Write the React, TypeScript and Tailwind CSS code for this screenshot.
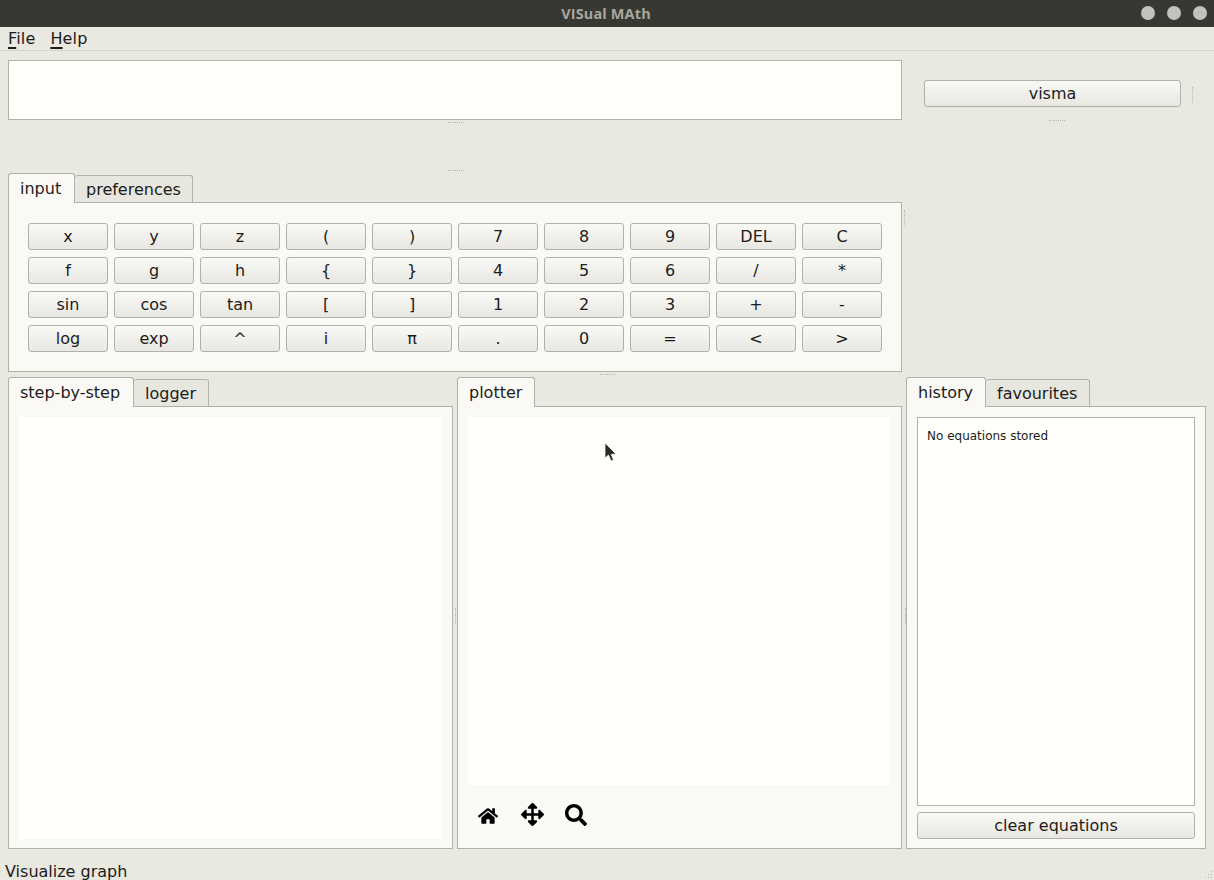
import React from "react";
import { FaHome, FaArrowsAlt, FaSearch } from "react-icons/fa";

const rows = [
  ["x", "y", "z", "(", ")", "7", "8", "9", "DEL", "C"],
  ["f", "g", "h", "{", "}", "4", "5", "6", "/", "*"],
  ["sin", "cos", "tan", "[", "]", "1", "2", "3", "+", "-"],
  ["log", "exp", "^", "i", "π", ".", "0", "=", "<", ">"],
];

function Btn({ label, className }: { label: string; className: string }) {
  return (
    <button className={"h-[27px] shrink-0 rounded-[3px] border border-[#b1b0a9] bg-gradient-to-b from-[#f9f9f6] to-[#e8e7e2] text-[16px] leading-[24px] text-[#1c1c1a] " + className}>
      {label}
    </button>
  );
}

function Tabs({ tabs }: { tabs: { label: string; w: string }[] }) {
  return (
    <div className="relative z-10 -mb-px flex h-[30px] items-end">
      {tabs.map((t, i) =>
        i === 0 ? (
          <div key={t.label} className={"flex h-[30px] items-start rounded-t-[3px] border border-b-0 border-[#b1b0a9] bg-[#faf9f5] pl-[11px] pt-[3px] text-[16px] leading-[24px] text-[#1c1c1a] " + t.w}>
            {t.label}
          </div>
        ) : (
          <div key={t.label} className={"flex h-[28px] items-start rounded-t-[3px] border border-l-0 border-[#b1b0a9] bg-[#e7e7e0] pl-[11px] pt-[2px] text-[16px] leading-[24px] text-[#1c1c1a] " + t.w}>
            {t.label}
          </div>
        )
      )}
    </div>
  );
}

function HDots({ className }: { className: string }) {
  return <div className={"absolute h-px w-[16px] border-t border-dotted border-[#b8b7b0] " + className} />;
}
function VDots({ className }: { className: string }) {
  return <div className={"absolute h-[16px] w-px border-l border-dotted border-[#b8b7b0] " + className} />;
}

export default function App() {
  return (
    <div className="relative flex h-[880px] w-[1214px] flex-col overflow-hidden bg-[#e9e9e2] font-['DejaVu_Sans',sans-serif] text-[#1c1c1a]">
      {/* Title bar */}
      <div className="relative flex h-[27px] shrink-0 items-center justify-center bg-[#383832]">
        <span className="pr-[2px] font-['Open_Sans','Noto_Sans',sans-serif] text-[14.4px] font-bold tracking-[0.2px] text-[#a7a7a0]">VISual MAth</span>
        <div className="absolute right-[7px] top-[6px] flex gap-[12px]">
          <span className="size-[14px] rounded-full bg-[#c2c2bd]" />
          <span className="size-[14px] rounded-full bg-[#c2c2bd]" />
          <span className="size-[14px] rounded-full bg-[#c2c2bd]" />
        </div>
      </div>

      {/* Menu bar */}
      <div className="flex h-[24px] shrink-0 items-start gap-[15px] border-b border-[#d3d2cc] pl-[8px] pt-[1px] text-[16px] leading-[22px] tracking-[0.15px]">
        <span><span className="underline decoration-2 underline-offset-[3px]">F</span>ile</span>
        <span><span className="underline decoration-2 underline-offset-[3px]">H</span>elp</span>
      </div>

      {/* Upper section */}
      <div className="flex h-[321px] shrink-0">
        <div className="ml-[8px] flex w-[894px] flex-col pt-[9px]">
          <div className="h-[60px] shrink-0 border border-[#b1b0a9] bg-[#fffffb]" />
          <div className="h-[53px] shrink-0" />
          <Tabs tabs={[{ label: "input", w: "w-[67px]" }, { label: "preferences", w: "w-[118px]" }]} />
          <div className="flex h-[170px] flex-col gap-[7px] border border-[#b1b0a9] bg-[#faf9f5] pl-[19px] pt-[20px]">
            {rows.map((r, i) => (
              <div key={i} className="flex gap-[6px]">
                {r.map((k) => (
                  <Btn key={k} label={k} className="w-[80px]" />
                ))}
              </div>
            ))}
          </div>
        </div>
        <div className="ml-[22px] pt-[29px]">
          <Btn label="visma" className="w-[257px]" />
        </div>
      </div>

      {/* Lower section */}
      <div className="flex gap-[4px] pl-[8px] pt-[5px]">
        <div className="flex w-[445px] flex-col">
          <Tabs tabs={[{ label: "step-by-step", w: "w-[126px]" }, { label: "logger", w: "w-[75px]" }]} />
          <div className="flex h-[443px] border border-[#b1b0a9] bg-[#faf9f5] p-[10px]">
            <div className="h-[422px] w-[423px] bg-[#fffffb]" />
          </div>
        </div>
        <div className="flex w-[445px] flex-col">
          <Tabs tabs={[{ label: "plotter", w: "w-[78px]" }]} />
          <div className="flex h-[443px] flex-col border border-[#b1b0a9] bg-[#faf9f5] p-[10px]">
            <div className="h-[368px] w-[422px] shrink-0 bg-[#fffffb]" />
            <div className="flex items-center pl-[10px] pt-[18px] text-black">
              <FaHome className="mt-[2px] size-[20px]" />
              <FaArrowsAlt className="ml-[23px] size-[23px]" />
              <FaSearch className="ml-[21px] size-[22px]" />
            </div>
          </div>
        </div>
        <div className="flex w-[300px] flex-col">
          <Tabs tabs={[{ label: "history", w: "w-[80px]" }, { label: "favourites", w: "w-[104px]" }]} />
          <div className="flex h-[443px] flex-col border border-[#b1b0a9] bg-[#faf9f5] p-[10px]">
            <div className="h-[389px] shrink-0 border border-[#b1b0a9] bg-[#fffffb] pl-[9px] pt-[11px] text-[12px] leading-[15px]">
              No equations stored
            </div>
            <Btn label="clear equations" className="mt-[6px] w-full" />
          </div>
        </div>
      </div>

      {/* Status bar */}
      <div className="absolute bottom-0 left-[5px] h-[17px] text-[16px] leading-[18px]">Visualize graph</div>

      {/* Splitter handles */}
      <HDots className="left-[448px] top-[122px]" />
      <HDots className="left-[448px] top-[170px]" />
      <HDots className="left-[1049px] top-[120px]" />
      <HDots className="left-[600px] top-[374px]" />
      <VDots className="left-[1192px] top-[87px]" />
      <VDots className="left-[904px] top-[210px]" />
      <VDots className="left-[455px] top-[608px]" />
      <VDots className="left-[905px] top-[608px]" />
      <svg className="absolute bottom-[1px] right-[1px] size-[8px]" viewBox="0 0 8 8" fill="#b4b3ac">
        <rect x="6" y="0" width="1" height="1" /><rect x="3" y="3" width="1" height="1" /><rect x="6" y="3" width="1" height="1" />
        <rect x="0" y="6" width="1" height="1" /><rect x="3" y="6" width="1" height="1" /><rect x="6" y="6" width="1" height="1" />
      </svg>

      {/* Mouse cursor */}
      <svg className="absolute left-[604px] top-[442px] h-[20px] w-[13px]" viewBox="0 0 13 20">
        <path d="M1 1 L1 16 L4.5 13 L7 19 L9.5 18 L7.2 12.4 L12 12 Z" fill="#2a2a2a" stroke="#f4f4f0" strokeWidth="0.8" />
      </svg>
    </div>
  );
}
